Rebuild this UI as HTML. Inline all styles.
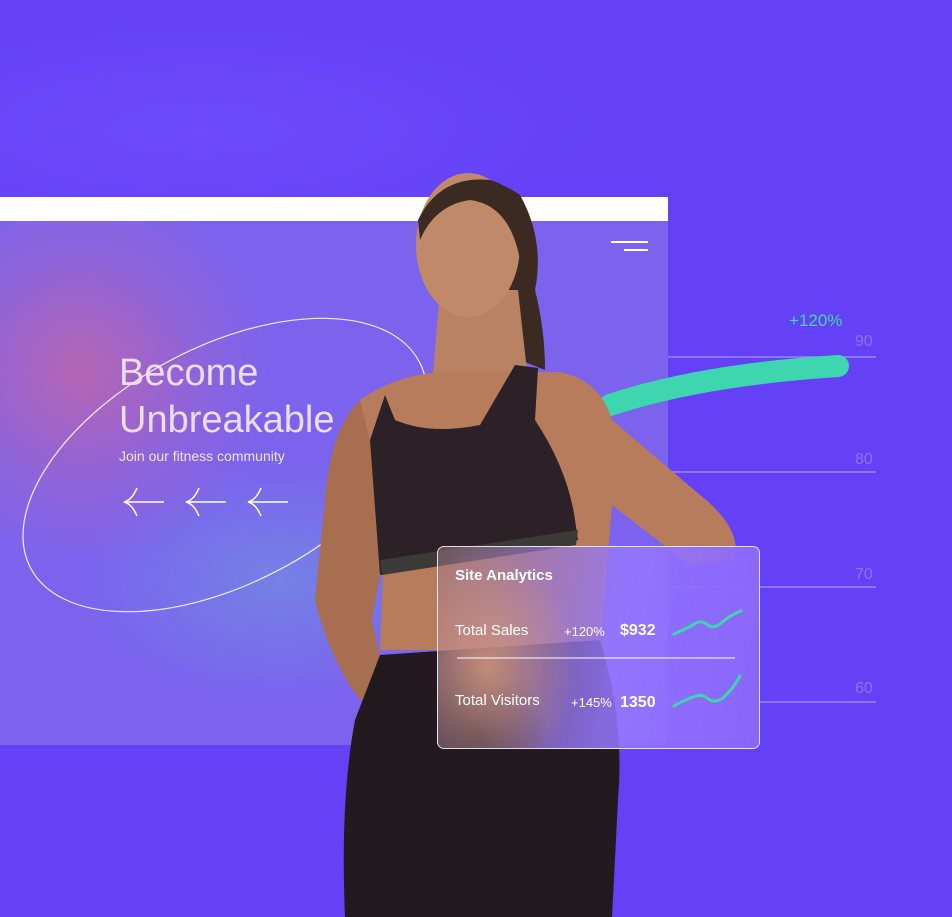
<!DOCTYPE html>
<html><head><meta charset="utf-8"><style>
body{margin:0;width:952px;height:917px;overflow:hidden;background:#6441f7;font-family:"Liberation Sans",sans-serif;position:relative}
.abs{position:absolute}
</style></head><body>
<div class="abs" style="left:0;top:0;width:952px;height:917px;background:radial-gradient(ellipse 400px 120px at 200px 130px,rgba(120,90,255,0.4),transparent)"></div>
<svg class="abs" style="left:0;top:0" width="952" height="917">
<g stroke="rgba(200,190,255,0.55)" stroke-width="1.5">
<line x1="660" y1="357" x2="876" y2="357"/><line x1="660" y1="472" x2="876" y2="472"/>
<line x1="660" y1="587" x2="876" y2="587"/><line x1="660" y1="702" x2="876" y2="702"/></g>
<g fill="#8c74f8" font-family="Liberation Sans" font-size="16"><text x="855" y="346">90</text><text x="855" y="464">80</text><text x="855" y="579">70</text><text x="855" y="693">60</text></g>
<text x="789" y="326" fill="#3fd8a8" font-family="Liberation Sans" font-size="17">+120%</text>
</svg>
<div class="abs" style="left:0;top:197px;width:668px;height:24px;background:#fff"></div>
<div class="abs" style="left:0;top:221px;width:668px;height:524px;background:radial-gradient(circle 260px at 80px 150px,#b566b4,rgba(160,100,200,0.5) 45%,transparent 75%),radial-gradient(ellipse 200px 120px at 280px 360px,rgba(110,160,220,0.5),transparent),#7b63ee"></div>
<div class="abs" style="left:611px;top:241px;width:37px;height:2px;background:#fff"></div>
<div class="abs" style="left:624px;top:249px;width:24px;height:2px;background:#fff"></div>
<div class="abs" style="left:119px;top:350px;font-size:38px;line-height:47px;color:#ecdcf4">Become<br>Unbreakable</div>
<div class="abs" style="left:119px;top:448px;font-size:14px;color:#f0e4f4">Join our fitness community</div>
<svg class="abs" style="left:0;top:0" width="952" height="917">
<ellipse cx="225" cy="465" rx="220" ry="118" transform="rotate(-28 225 465)" fill="none" stroke="#f2eaff" stroke-width="1.2"/>
<g fill="none" stroke="#fff" stroke-width="1.5">
<path d="M124 502H164M137 488Q132 500 124 502Q132 504 137 516"/>
<path d="M186 502H226M199 488Q194 500 186 502Q194 504 199 516"/>
<path d="M248 502H288M261 488Q256 500 248 502Q256 504 261 516"/></g>
<path d="M610 405Q700 375 838 366" stroke="#3dd6ae" stroke-width="22" stroke-linecap="round" fill="none"/>
<path d="M430 210Q470 160 520 195Q545 240 535 290Q545 330 545 370L520 360L500 300Z" fill="#3a2a22"/>
<path d="M440 290L518 290L528 380L432 385Z" fill="#b98262"/>
<ellipse cx="468" cy="245" rx="52" ry="72" fill="#c08a6a"/>
<path d="M418 220Q440 175 490 180Q525 190 528 230L520 260Q510 205 470 200Q435 205 420 240Z" fill="#3a2a22"/>
<path d="M360 400Q400 372 450 372L560 372Q600 380 612 420L700 495Q742 528 735 560L690 565L612 505L600 650L380 650L385 520Q370 480 360 440Z" fill="#b67c5c"/>
<path d="M360 400Q330 430 325 500L315 600Q330 660 360 700L388 695L372 620L390 520Z" fill="#a86e50"/>
<path d="M370 440L385 395L395 420Q430 435 480 425L515 365L538 368L535 420Q568 470 575 520L578 540L380 575Z" fill="#2b2127"/>
<path d="M380 560L578 530L576 545L382 575Z" fill="#3c3a36"/>
<path d="M380 655L600 640Q625 720 618 800L612 917L345 917Q340 800 355 720Z" fill="#221a1f"/>
</svg>
<div class="abs" style="left:437px;top:546px;width:321px;height:201px;border:1.5px solid rgba(255,255,255,0.8);border-radius:7px;background:radial-gradient(ellipse 90px 120px at 50px 120px,rgba(210,150,120,0.85),transparent),radial-gradient(ellipse 70px 80px at 40px 190px,rgba(60,50,60,0.8),transparent),linear-gradient(100deg,rgba(160,120,130,0.5),rgba(150,120,255,0.85) 55%,#8a66f8);overflow:hidden">
<div class="abs" style="left:17px;top:20px;font-size:15px;font-weight:bold;color:#fff">Site Analytics</div>
<div class="abs" style="left:17px;top:75px;font-size:15px;color:#fff">Total Sales</div>
<div class="abs" style="left:126px;top:77px;font-size:13px;color:#fff">+120%</div>
<div class="abs" style="left:182px;top:75px;font-size:16px;font-weight:bold;color:#fff">$932</div>
<div class="abs" style="left:19px;top:110px;width:278px;height:1.5px;background:rgba(255,255,255,0.5)"></div>
<div class="abs" style="left:17px;top:145px;font-size:15px;color:#fff">Total Visitors</div>
<div class="abs" style="left:133px;top:148px;font-size:13px;color:#fff">+145%</div>
<div class="abs" style="left:182px;top:147px;font-size:16px;font-weight:bold;color:#fff">1350</div>
<svg class="abs" style="left:0;top:0" width="321" height="201"><g fill="none" stroke="#3dd6ae" stroke-width="3" stroke-linecap="round">
<path d="M236 87Q248 82 258 76Q264 73 270 78Q275 82 282 77Q292 68 303 64"/>
<path d="M236 159Q248 152 258 149Q265 147 272 153Q277 156 285 151Q295 142 302 129"/></g></svg>
</div>
</body></html>
